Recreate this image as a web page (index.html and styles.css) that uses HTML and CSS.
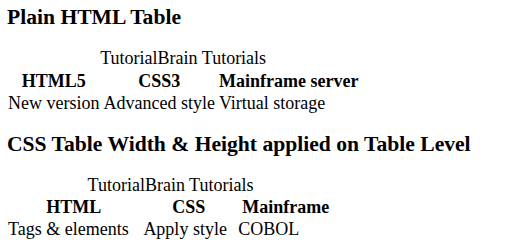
FILE: index.html
```html
<!DOCTYPE html>
<html lang="en">
<head>
  <meta charset="UTF-8">
  <title>CSS Table Width &amp; Height</title>
  <link rel="stylesheet" href="styles.css">
</head>
<body>
  <h3>Plain HTML Table</h3>
  <table>
    <caption>TutorialBrain Tutorials</caption>
    <tr>
      <th>HTML5</th>
      <th>CSS3</th>
      <th>Mainframe server</th>
    </tr>
    <tr>
      <td>New version</td>
      <td>Advanced style</td>
      <td>Virtual storage</td>
    </tr>
  </table>

  <h3>CSS Table Width &amp; Height applied on Table Level</h3>
  <table class="sized">
    <caption>TutorialBrain Tutorials</caption>
    <tr>
      <th>HTML</th>
      <th>CSS</th>
      <th>Mainframe</th>
    </tr>
    <tr>
      <td>Tags &amp; elements</td>
      <td>Apply style</td>
      <td>COBOL</td>
    </tr>
  </table>
</body>
</html>
```

FILE: styles.css
```css
body {
  margin: 0 7px;
  font-family: "Liberation Serif", "Times New Roman", serif;
  font-size: 18px;
  color: #000;
}

h3 {
  margin: 17px 0 19px;
  font-size: 21.6px;
  line-height: 25px;
}

h3:first-child {
  margin-top: 5px;
}

table {
  margin-left: -2px;
  line-height: 18px;
}

caption {
  padding-bottom: 1.5px;
}

.sized {
  width: 331px;
  height: 40px;
}
```
